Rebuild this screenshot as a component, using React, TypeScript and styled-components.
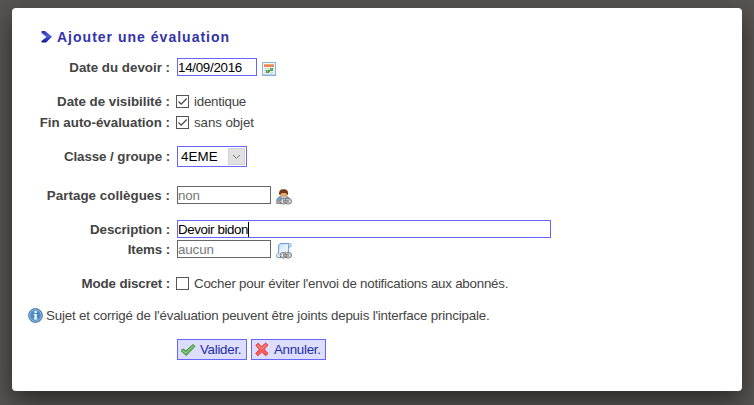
import React from "react";
import styled, { createGlobalStyle } from "styled-components";

const GlobalStyle = createGlobalStyle`
  *, *::before, *::after { box-sizing: border-box; }
  html, body { margin: 0; height: 100%; overflow: hidden; }
  body {
    background: #565452;
    color: #444;
    font: 13.33px/16px "Liberation Sans", Arial, sans-serif;
    letter-spacing: -0.23px;
  }
  svg { display: block; flex: none; }
`;

const Backdrop = styled.div`
  width: 754px;
  height: 405px;
  padding: 8px 12px 14px;
  overflow: hidden;
`;

const Dialog = styled.form`
  height: 383px;
  padding: 20px 16px 0;
  background: #fff;
  border-radius: 4px;
  box-shadow: 0 10px 25px rgba(0, 0, 0, 0.5);
`;

const Title = styled.h2`
  display: flex;
  align-items: center;
  gap: 5px;
  height: 18px;
  margin: 0 0 11px 13px;
  color: #3333aa;
  font-size: 14px;
  font-weight: bold;
  letter-spacing: 1.01px;
  white-space: nowrap;
`;

const Row = styled.div<{ $h?: number; $gap?: number }>`
  display: grid;
  grid-template-columns: 142px 1fr;
  column-gap: 7px;
  align-items: center;
  height: ${(p) => p.$h ?? 20}px;
  margin-bottom: ${(p) => p.$gap ?? 0}px;
`;

const Label = styled.label<{ $track?: number }>`
  padding-top: 1px;
  font-weight: bold;
  text-align: right;
  white-space: nowrap;
  letter-spacing: ${(p) => p.$track ?? 0}px;
`;

const Field = styled.div<{ $track?: number }>`
  display: flex;
  align-items: center;
  white-space: nowrap;
  letter-spacing: ${(p) => p.$track ?? -0.23}px;
`;

const Text = styled.span`
  padding-top: 1px;
`;

const Input = styled.div<{ $w: number; $readonly?: boolean; $track?: number }>`
  display: flex;
  align-items: center;
  width: ${(p) => p.$w}px;
  height: 18px;
  margin-right: 5px;
  border: 1px solid ${(p) => (p.$readonly ? "#666" : "#6666ff")};
  color: ${(p) => (p.$readonly ? "#777" : "#000")};
  background: #fff;
  padding-top: 1px;
  letter-spacing: ${(p) => p.$track ?? -0.1}px;
`;

const Caret = styled.span`
  width: 1px;
  height: 15px;
  background: #000;
`;

const Select = styled.div`
  display: flex;
  align-items: center;
  justify-content: space-between;
  width: 70px;
  height: 21px;
  padding: 1px 1px 1px 3px;
  border: 1px solid #6666ff;
  color: #000;
  letter-spacing: 0.1px;
`;

const SelectArrow = styled.span`
  display: flex;
  align-items: center;
  justify-content: center;
  width: 17px;
  height: 17px;
  background: #e1e1e1;
  border: 1px solid #d2d2d2;
`;

const Box = styled.span`
  width: 13px;
  height: 13px;
  margin: 0 5px 0 -1px;
  border: 1px solid #555;
  background: #fff;
`;

const IconSlot = styled.span`
  padding-top: 4px;
`;

const Note = styled.p`
  display: flex;
  align-items: center;
  gap: 3px;
  height: 16px;
  margin: 0 0 16px;
  letter-spacing: -0.18px;
  white-space: nowrap;
`;

const Actions = styled.div`
  display: flex;
  gap: 4px;
  padding-left: 149px;
`;

const Button = styled.button<{ $w: number }>`
  display: flex;
  align-items: center;
  gap: 4px;
  width: ${(p) => p.$w}px;
  height: 21px;
  padding: 0 0 0 2px;
  border: 1px solid #6666ff;
  background: #ddddff;
  color: #1c2fa0;
  font: inherit;
  letter-spacing: -0.28px;
  white-space: nowrap;
`;

function TitleArrow() {
  return (
    <svg width="11" height="12" viewBox="0 0 11 12">
      <defs>
        <linearGradient id="arrow" x1="0" y1="0" x2="0" y2="1">
          <stop offset="0" stopColor="#3030b8" />
          <stop offset="0.45" stopColor="#4a60dc" />
          <stop offset="1" stopColor="#12128c" />
        </linearGradient>
      </defs>
      <path d="M0.5 0H4L11 5.8L5 11.5H0.5V10L5.4 6L0.5 2Z" fill="url(#arrow)" />
    </svg>
  );
}

function CalendarIcon() {
  return (
    <svg width="14" height="14" viewBox="0 0 14 14">
      <rect x=".5" y=".5" width="13" height="13" fill="#f5faff" stroke="#85b5dd" />
      <rect x="1" y="12" width="12" height="1" fill="#b9d2ea" />
      <rect x="2" y="2" width="10" height="3" fill="#ef854e" />
      <path d="M2 2.5H12" stroke="#f5a878" />
      <path d="M2 6.5H12M2 8.5H12M2 10.5H12M3.5 6V12M6.5 6V12M9.5 6V12" stroke="#d3d8de" />
      <path d="M8 6H11V9H8ZM4 8H7V11H4ZM7 8H8V10H7Z" fill="#54a34c" />
      <path d="M9 7H10V8H9ZM5 9H6V10H5Z" fill="#8bc684" />
    </svg>
  );
}

function LinkBadge() {
  return (
    <g>
      <rect x="4.1" y="9.6" width="6.6" height="5.4" rx="2.7" fill="#fff" stroke="#5f5f5f" strokeWidth=".9" />
      <rect x="8.9" y="9.6" width="6.6" height="5.4" rx="2.7" fill="#fff" stroke="#5f5f5f" strokeWidth=".9" />
      <rect x="5.1" y="10.6" width="4.6" height="3.4" rx="1.7" fill="#eee" stroke="#b5b5b5" />
      <rect x="9.9" y="10.6" width="4.6" height="3.4" rx="1.7" fill="#eee" stroke="#b5b5b5" />
      <path d="M7 12.3H12.7" stroke="#555" strokeWidth="2.2" />
      <path d="M7.2 12.2H12.5" stroke="#ddd" strokeWidth=".9" />
    </g>
  );
}

function UserLinkIcon() {
  return (
    <svg width="16" height="16" viewBox="0 0 16 16">
      <path d="M.8 14.5C.2 10 2 7.6 5 7.6H10C13 7.6 14.4 10 14 14.5Z" fill="#6fa5d9" stroke="#5079a3" strokeWidth=".8" />
      <path d="M1.2 12H4.5V14.3H1.2Z" fill="#d79c68" />
      <path d="M5.5 8L7.5 10.2L9.7 8Z" fill="#f5f5fa" />
      <rect x="4" y="1.5" width="7.4" height="7" rx="3.2" fill="#e2a873" />
      <path d="M3.2 5.8C2.5 1.8 4.5.2 7.7.2S12.8 2 12 5.8H11C10.8 4.4 10 3.8 8.5 4C6.5 4.2 5.2 3.5 4.4 5.8Z" fill="#753b15" />
      <LinkBadge />
    </svg>
  );
}

function ScriptLinkIcon() {
  return (
    <svg width="16" height="16" viewBox="0 0 16 16">
      <defs>
        <linearGradient id="paper" x1="0" y1="0" x2="1" y2="1">
          <stop offset="0" stopColor="#b8d9fa" />
          <stop offset="0.5" stopColor="#eaf6ff" />
          <stop offset="1" stopColor="#a9cef4" />
        </linearGradient>
      </defs>
      <path d="M4 .6H13.5C15.6.6 15.6 4 13.5 4H12.7V14.5H1.8C0 14.5 0 11 1.8 11H2.6V2.2Z" fill="url(#paper)" stroke="#669ad1" />
      <path d="M12.6 1.5V4" fill="none" stroke="#669ad1" />
      <LinkBadge />
    </svg>
  );
}

function InfoIcon() {
  return (
    <svg width="15" height="15" viewBox="0 0 15 15">
      <circle cx="7.5" cy="7.5" r="6.9" fill="#4383bf" stroke="#52789f" />
      <circle cx="7.5" cy="7.5" r="5.8" fill="#4c8bc6" stroke="#a4c8e8" strokeWidth=".9" />
      <path d="M6.5 3H8.7V5H6.5ZM5.7 6H8.7V10.4H9.5V11.6H5.6V10.4H6.5V7.1H5.7Z" fill="#fff" />
    </svg>
  );
}

function ValidIcon() {
  return (
    <svg width="16" height="16" viewBox="0 0 16 16">
      <path d="M1 8.6L3.2 6.9L5.9 9L13 2.5L15 4.3L6.2 13.5Z" fill="#65b45a" stroke="#408c39" strokeLinejoin="round" />
      <path d="M2.4 8.5L6 11L13.5 3.8" fill="none" stroke="#93d386" />
    </svg>
  );
}

function CancelIcon() {
  return (
    <svg width="16" height="16" viewBox="0 0 16 16">
      <path d="M1.8 3.3L4.2 1.2L7.5 4.7L11.7 1L13.9 3L10.3 7.3L14 11.5L11.8 13.7L7.7 10.1L4 13.7L1.7 11.5L5.2 7.5Z" fill="#f75c5c" stroke="#e04444" strokeLinejoin="round" />
      <path d="M3.3 3.2L7.8 6.8L12.3 2.7" fill="none" stroke="#ff9a91" />
    </svg>
  );
}

function Checkbox({ checked }: { checked?: boolean }) {
  return (
    <Box role="checkbox" aria-checked={!!checked}>
      {checked && (
        <svg width="11" height="11" viewBox="0 0 11 11">
          <path d="M1.5 5.5L4.2 8.2L9.7 2.5" fill="none" stroke="#444" strokeWidth="1.2" />
        </svg>
      )}
    </Box>
  );
}

export default function App() {
  return (
    <>
      <GlobalStyle />
      <Backdrop>
        <Dialog>
          <Title>
            <TitleArrow />
            Ajouter une évaluation
          </Title>
          <Row $gap={14}>
            <Label>Date du devoir :</Label>
            <Field>
              <Input $w={80} $track={-0.27}>14/09/2016</Input>
              <IconSlot><CalendarIcon /></IconSlot>
            </Field>
          </Row>
          <Row $gap={1}>
            <Label $track={-0.02}>Date de visibilité :</Label>
            <Field><Checkbox checked /><Text>identique</Text></Field>
          </Row>
          <Row $gap={14}>
            <Label>Fin auto-évaluation :</Label>
            <Field $track={-0.08}><Checkbox checked /><Text>sans objet</Text></Field>
          </Row>
          <Row $h={21} $gap={18}>
            <Label $track={-0.08}>Classe / groupe :</Label>
            <Field>
              <Select>
                4EME
                <SelectArrow>
                  <svg width="9" height="6" viewBox="0 0 9 6">
                    <path d="M1 1L4.5 4.5L8 1" fill="none" stroke="#777" />
                  </svg>
                </SelectArrow>
              </Select>
            </Field>
          </Row>
          <Row $gap={14}>
            <Label $track={0.05}>Partage collègues :</Label>
            <Field>
              <Input $w={94} $readonly>non</Input>
              <IconSlot><UserLinkIcon /></IconSlot>
            </Field>
          </Row>
          <Row>
            <Label $track={-0.12}>Description :</Label>
            <Field><Input $w={374} $track={-0.4}>Devoir bidon<Caret /></Input></Field>
          </Row>
          <Row $gap={14}>
            <Label $track={-0.1}>Items :</Label>
            <Field>
              <Input $w={94} $readonly>aucun</Input>
              <IconSlot><ScriptLinkIcon /></IconSlot>
            </Field>
          </Row>
          <Row $gap={14}>
            <Label $track={-0.14}>Mode discret :</Label>
            <Field>
              <Checkbox />
              <Text>Cocher pour éviter l'envoi de notifications aux abonnés.</Text>
            </Field>
          </Row>
          <Note>
            <InfoIcon />
            <Text>Sujet et corrigé de l'évaluation peuvent être joints depuis l'interface principale.</Text>
          </Note>
          <Actions>
            <Button type="button" $w={70}><ValidIcon />Valider.</Button>
            <Button type="button" $w={75}><CancelIcon />Annuler.</Button>
          </Actions>
        </Dialog>
      </Backdrop>
    </>
  );
}
